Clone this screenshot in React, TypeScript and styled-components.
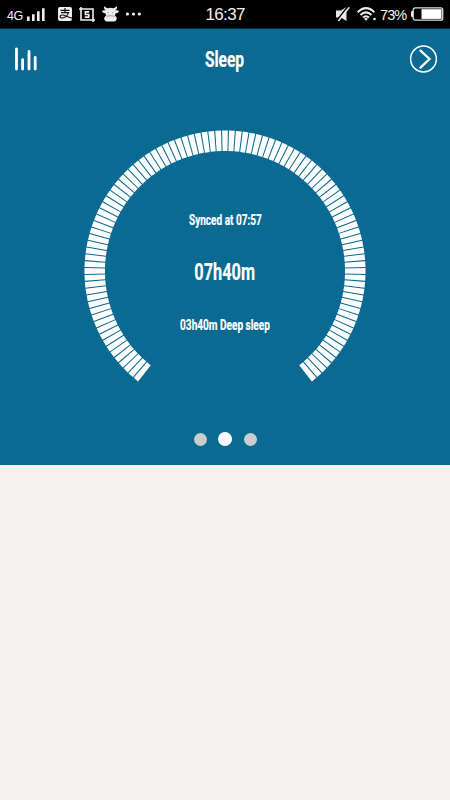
import React from "react";
import styled, { createGlobalStyle } from "styled-components";

const Global = createGlobalStyle`
  * { box-sizing: border-box; }
  body { margin: 0; background: #f4f3ef; }
`;

const Screen = styled.div`
  width: 450px;
  height: 800px;
  display: flex;
  flex-direction: column;
  background: #f4f3ef;
  color: #fff;
  font-family: Roboto, sans-serif;
`;

const StatusBar = styled.header`
  height: 29px;
  flex: none;
  display: grid;
  grid-template-columns: 1fr auto 1fr;
  align-items: center;
  padding: 0 6px 0 7px;
  background: #000;
  border-bottom: 1px solid #053349;
`;

const StatusGroup = styled.div<{ $end?: boolean }>`
  display: flex;
  align-items: center;
  justify-content: ${(p) => (p.$end ? "flex-end" : "flex-start")};
  svg { display: block; flex: none; }
`;

const StatusText = styled.span<{ $size: number; $width: number; $top?: number; $spacing?: number }>`
  width: ${(p) => p.$width}px;
  margin-top: ${(p) => p.$top ?? 0}px;
  font-family: "Liberation Sans", Arial, sans-serif;
  font-size: ${(p) => p.$size}px;
  line-height: 20px;
  letter-spacing: ${(p) => p.$spacing ?? 0}px;
  white-space: nowrap;
  color: #f0f0f0;
`;

const Panel = styled.main`
  height: 436px;
  flex: none;
  display: flex;
  flex-direction: column;
  align-items: center;
  background: #0a6a92;
`;

const TitleBar = styled.div`
  width: 100%;
  height: 59px;
  display: grid;
  grid-template-columns: 40px 1fr 40px;
  align-items: center;
  padding: 0 13px 0 14px;
`;

const IconButton = styled.button<{ $end?: boolean }>`
  display: flex;
  justify-content: ${(p) => (p.$end ? "flex-end" : "flex-start")};
  padding: 0;
  border: 0;
  background: none;
`;

const Label = styled.div<{ $size: number; $squeeze: number }>`
  font-size: ${(p) => p.$size}px;
  font-weight: 700;
  line-height: 30px;
  height: 30px;
  text-align: center;
  white-space: nowrap;
  -webkit-text-stroke: 0.2px #fff;
  transform: scaleX(${(p) => p.$squeeze});
`;

const Title = styled(Label)`
  margin-right: 2px;
`;

const Gauge = styled.section`
  width: 285px;
  height: 284px;
  margin-top: 41px;
  display: grid;
  place-items: center;
  > * { grid-area: 1 / 1; }
`;

const Readout = styled.div`
  display: flex;
  flex-direction: column;
  align-items: center;
  gap: 22.5px;
  padding-top: 2px;
`;

const Dots = styled.nav`
  height: 14px;
  margin-top: 19px;
  display: flex;
  align-items: center;
  gap: 11.5px;
`;

const Dot = styled.span<{ $active?: boolean }>`
  width: ${(p) => (p.$active ? 14 : 13)}px;
  height: ${(p) => (p.$active ? 14 : 13)}px;
  border-radius: 50%;
  background: ${(p) => (p.$active ? "#fff" : "#cdcdcd")};
`;

const TICK_STEP = 360 / 128;
const ticks = Array.from({ length: 101 }, (_, i) => (i - 50) * TICK_STEP);

const Signal = () => (
  <svg width="18" height="13" viewBox="0 0 18 13" fill="#eee">
    <path d="M0 8.500h2.600v4.500H0zM5 6.200h2.600v6.800H5zM10 3.200h2.600v9.800H10zM15 .3h2.600v12.700H15z" />
  </svg>
);

const PayIcon = () => (
  <svg width="14" height="14" viewBox="0 0 14 14" fill="none">
    <rect width="14" height="14" rx="2" fill="#eee" />
    <path d="M2.500 3.300h9M7 1v4.500M3 5.700h7.500C9.500 9 6.500 11 4 11c-2.500 0-2.500-3 0-3 3 0 5.500 2 10 3.200" stroke="#111" strokeWidth="1.200" />
  </svg>
);

const ShotIcon = () => (
  <svg width="16" height="15" viewBox="0 0 16 15" fill="none" stroke="#eee">
    <path d="M0 2h14v13M2 0v13h14" strokeWidth="1.600" />
    <path d="M10.200 4.900H6.400v2.600h3.300V10.100H5.800" strokeWidth="1.600" />
  </svg>
);

const CowIcon = () => (
  <svg width="17" height="16" viewBox="0 0 17 16">
    <path d="M2.500 0C1.500 2 2 3.500 4 4L0 4.800C.8 7 2 7.500 3.500 7.200L4 9.700C1.500 11 1.500 15 5 15.500h7c3.500-.5 3.500-4.500 1-5.800l.5-2.500c1.500.3 2.700-.2 3.500-2.400L13 4c2-.5 2.500-2 1.500-4-.7 1.500-2 2-3.500 2.300-1.500-.8-3.500-.8-5 0C4.500 2 3.200 1.500 2.500 0z" fill="#eee" />
    <path d="M5.500 6.200l1.300.8M11.500 6.200l-1.300.8M4.300 10.200q4.200-1 8.400 0" fill="none" stroke="#999" />
  </svg>
);

const MoreIcon = () => (
  <svg width="16" height="4" viewBox="0 0 16 4" fill="#eee">
    <circle cx="1.500" cy="2" r="1.600" /><circle cx="7.500" cy="2" r="1.600" /><circle cx="13.300" cy="2" r="1.600" />
  </svg>
);

const MutedIcon = () => (
  <svg width="14" height="14" viewBox="0 0 14 14">
    <path d="M0 3.500h5L10.500 0v14L5 10.500H0z" fill="#e6e6e6" />
    <path d="M.8 13.500L11.300 0" stroke="#000" strokeWidth="1.300" />
    <path d="M2.400 14L13.300 .3" stroke="#eee" strokeWidth="1.500" />
  </svg>
);

const WifiIcon = () => (
  <svg width="20" height="14" viewBox="0 0 20 14" fill="none" stroke="#eee" strokeWidth="2">
    <path d="M.7 5.200Q9 -3 17.300 5.200M3.500 8Q9 2.700 14.500 8M6 10.600Q9 7.800 12 10.600" />
    <path d="M7 11.800q2-1.500 4 0l-2 2z" fill="#eee" stroke="none" />
    <circle cx="17.500" cy="12" r="1.300" fill="#eee" stroke="none" />
  </svg>
);

const BatteryIcon = () => (
  <svg width="33" height="14" viewBox="0 0 33 14">
    <path d="M2 4H1Q0 4 0 5v4q0 1 1 1h1z" fill="#eee" />
    <rect x="2.200" y=".9" width="29.500" height="12.300" rx="2" fill="none" stroke="#ddd" strokeWidth="1.300" />
    <rect x="10.500" y="2.200" width="20" height="9.700" fill="#fff" />
  </svg>
);

const BarsIcon = () => (
  <svg width="24" height="26" viewBox="0 0 24 26" stroke="#fff" strokeWidth="2.800" strokeLinecap="round">
    <path d="M2.500 3v20M8.600 13.700v9.300M15 5.500v17.500M21.200 11.500v11.500" />
  </svg>
);

const NextIcon = () => (
  <svg width="28" height="28" viewBox="0 0 28 28" fill="none" stroke="#fff">
    <circle cx="14.500" cy="14" r="12.900" strokeWidth="1.500" />
    <path d="M11.500 5.600L20.500 14l-9 8.600" strokeWidth="2.300" strokeLinecap="round" />
  </svg>
);

const SleepRing = () => (
  <svg width="285" height="284" viewBox="-142 -142 285 284" fill="#fff">
    {ticks.map((angle) => (
      <path key={angle} d="M-2.900-140.500H2.900L2.450-120H-2.450z" transform={`rotate(${angle})`} />
    ))}
  </svg>
);

const Icons = styled.div`
  display: flex;
  align-items: center;
  gap: 7px;
  margin-left: 13px;
`;

const EndIcons = styled.div`
  display: flex;
  align-items: center;
  gap: 7px;
  margin-right: 3px;
`;

export default function App() {
  return (
    <Screen>
      <Global />
      <StatusBar>
        <StatusGroup>
          <StatusText $size={12.5} $width={20} $top={3} $spacing={-0.5}>4G</StatusText>
          <Signal />
          <Icons>
            <PayIcon />
            <ShotIcon />
            <CowIcon />
            <MoreIcon />
          </Icons>
        </StatusGroup>
        <StatusText $size={17} $width={40} $top={2} $spacing={-0.65}>16:37</StatusText>
        <StatusGroup $end>
          <EndIcons>
            <MutedIcon />
            <WifiIcon />
          </EndIcons>
          <StatusText $size={14.5} $width={31} $top={2} $spacing={-0.9}>73%</StatusText>
          <BatteryIcon />
        </StatusGroup>
      </StatusBar>
      <Panel>
        <TitleBar>
          <IconButton aria-label="Statistics"><BarsIcon /></IconButton>
          <Title $size={22.5} $squeeze={0.69}>Sleep</Title>
          <IconButton aria-label="Next" $end><NextIcon /></IconButton>
        </TitleBar>
        <Gauge>
          <SleepRing />
          <Readout>
            <Label $size={15} $squeeze={0.67}>Synced at 07:57</Label>
            <Label $size={24} $squeeze={0.68}>07h40m</Label>
            <Label $size={15} $squeeze={0.67}>03h40m Deep sleep</Label>
          </Readout>
        </Gauge>
        <Dots>
          <Dot />
          <Dot $active />
          <Dot />
        </Dots>
      </Panel>
    </Screen>
  );
}
